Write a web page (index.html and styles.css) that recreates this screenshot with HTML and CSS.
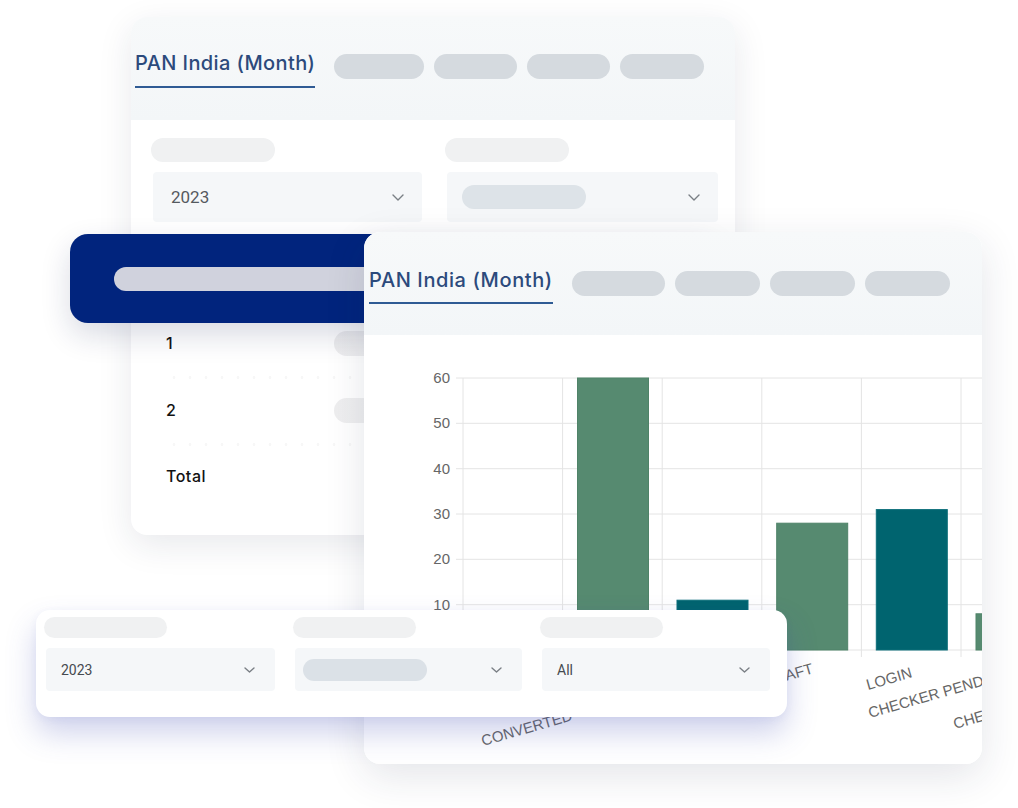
FILE: index.html
```html
<!DOCTYPE html>
<html lang="en">
<head>
<meta charset="utf-8">
<title>PAN India (Month)</title>
<link rel="stylesheet" href="styles.css">
</head>
<body>
<div class="stage">

  <!-- Back card: filters + table -->
  <section class="card card-a">
    <div class="card-head head-a">
      <div class="tabs">
        <div class="tab">PAN India (Month)</div>
        <span class="tab-pill w90"></span>
        <span class="tab-pill w83"></span>
        <span class="tab-pill w83"></span>
        <span class="tab-pill w84"></span>
      </div>
    </div>
    <div class="body-a">
      <div class="filters-a">
        <div class="field">
          <span class="sk-label w124"></span>
          <div class="select select-lg">
            <span class="val">2023</span>
            <svg class="chev" width="12" height="7" viewBox="0 0 12 7"><polyline points="1,1 6,6 11,1" /></svg>
          </div>
        </div>
        <div class="field">
          <span class="sk-label w124"></span>
          <div class="select select-lg">
            <span class="sk-inner w124"></span>
            <svg class="chev" width="12" height="7" viewBox="0 0 12 7"><polyline points="1,1 6,6 11,1" /></svg>
          </div>
        </div>
      </div>
      <div class="table-head"><span class="th-pill"></span></div>
      <div class="row"><span class="cell">1</span><span class="sk-cell"></span></div>
      <div class="sep"></div>
      <div class="row"><span class="cell">2</span><span class="sk-cell"></span></div>
      <div class="sep sep-2"></div>
      <div class="row"><span class="cell">Total</span></div>
    </div>
  </section>

  <!-- Chart card -->
  <section class="card card-b">
    <div class="card-head head-b">
      <div class="tabs">
        <div class="tab">PAN India (Month)</div>
        <span class="tab-pill w93"></span>
        <span class="tab-pill w85"></span>
        <span class="tab-pill w85"></span>
        <span class="tab-pill w85"></span>
      </div>
    </div>
    <div class="chart">
      <svg width="618" height="429" viewBox="0 0 618 429">
        <g class="grid">
          <line x1="92" y1="43" x2="618" y2="43"/>
          <line x1="92" y1="88.3" x2="618" y2="88.3"/>
          <line x1="92" y1="133.7" x2="618" y2="133.7"/>
          <line x1="92" y1="179" x2="618" y2="179"/>
          <line x1="92" y1="224.3" x2="618" y2="224.3"/>
          <line x1="92" y1="269.7" x2="618" y2="269.7"/>
          <line x1="92" y1="315" x2="618" y2="315"/>
          <line x1="99" y1="43" x2="99" y2="322"/>
          <line x1="198.6" y1="43" x2="198.6" y2="322"/>
          <line x1="298.2" y1="43" x2="298.2" y2="322"/>
          <line x1="397.8" y1="43" x2="397.8" y2="322"/>
          <line x1="497.4" y1="43" x2="497.4" y2="322"/>
          <line x1="597" y1="43" x2="597" y2="322"/>
        </g>
        <g class="ylab">
          <text x="86" y="48">60</text>
          <text x="86" y="93.3">50</text>
          <text x="86" y="138.7">40</text>
          <text x="86" y="184">30</text>
          <text x="86" y="229.3">20</text>
          <text x="86" y="274.7">10</text>
        </g>
        <rect class="bar-g" x="213.5" y="43" width="71" height="272"/>
        <rect class="bar-t" x="313" y="265.2" width="71" height="49.8"/>
        <rect class="bar-g" x="412.7" y="188.2" width="71" height="126.8"/>
        <rect class="bar-t" x="512.3" y="174.6" width="71" height="140.4"/>
        <rect class="bar-g" x="612" y="278.8" width="71" height="36.2"/>
        <g class="xlab">
          <text x="119" y="411" transform="rotate(-16 119 411)">CONVERTED</text>
          <text x="450" y="338" text-anchor="end" transform="rotate(-16 450 338)">DRAFT</text>
          <text x="504" y="355" transform="rotate(-16 504 355)">LOGIN</text>
          <text x="506" y="383" transform="rotate(-16 506 383)">CHECKER PENDING</text>
          <text x="591" y="394" transform="rotate(-16 591 394)">CHECKER</text>
        </g>
      </svg>
    </div>
  </section>

  <!-- Front card: filters -->
  <section class="card card-c">
    <div class="filters-c">
      <div class="field">
        <span class="sk-label sk-sm w123"></span>
        <div class="select select-sm">
          <span class="val">2023</span>
          <svg class="chev" width="11" height="6" viewBox="0 0 11 6"><polyline points="1,1 5.5,5 10,1" /></svg>
        </div>
      </div>
      <div class="field">
        <span class="sk-label sk-sm w123"></span>
        <div class="select select-sm">
          <span class="sk-inner sk-inner-sm"></span>
          <svg class="chev" width="11" height="6" viewBox="0 0 11 6"><polyline points="1,1 5.5,5 10,1" /></svg>
        </div>
      </div>
      <div class="field">
        <span class="sk-label sk-sm w123"></span>
        <div class="select select-sm">
          <span class="val">All</span>
          <svg class="chev" width="11" height="6" viewBox="0 0 11 6"><polyline points="1,1 5.5,5 10,1" /></svg>
        </div>
      </div>
    </div>
  </section>

</div>
</body>
</html>
```

FILE: styles.css
```css
* { box-sizing: border-box; }

html, body {
  margin: 0;
  padding: 0;
  background: #ffffff;
}

body {
  font-family: "Inter", "Noto Sans", sans-serif;
  color: #111;
}

.stage {
  position: relative;
  width: 1018px;
  height: 808px;
  overflow: hidden;
  background: #ffffff;
}

/* ---------- cards (free canvas windows) ---------- */
.card {
  position: absolute;
  background: #ffffff;
  border-radius: 16px;
}

.card-a {
  left: 131px;
  top: 17px;
  width: 604px;
  height: 518px;
  box-shadow: 0 10px 34px rgba(30, 40, 70, 0.10);
  z-index: 1;
}

.card-b {
  left: 364px;
  top: 232px;
  width: 618px;
  height: 532px;
  overflow: hidden;
  box-shadow: 0 12px 40px rgba(30, 40, 70, 0.12);
  z-index: 3;
}

.card-c {
  left: 36px;
  top: 610px;
  width: 751px;
  height: 107px;
  border-radius: 14px;
  box-shadow: 0 16px 30px rgba(70, 80, 180, 0.26), 0 2px 8px rgba(70, 80, 180, 0.06);
  z-index: 4;
}

/* ---------- tab headers ---------- */
.card-head {
  background: linear-gradient(#f7f9fa, #f3f6f8);
  border-radius: 16px 16px 0 0;
}

.head-a {
  padding: 34px 0 32px 4px;
}

.head-b {
  padding: 36px 0 31px 5px;
}

.tabs {
  display: flex;
  align-items: flex-start;
  gap: 10px;
}

.tab {
  font-family: "Inter", "Noto Sans", sans-serif;
  font-size: 20px;
  line-height: 24px;
  font-weight: 500;
  letter-spacing: 0.4px;
  color: #2c4a7c;
  padding-bottom: 10px;
  border-bottom: 2px solid #2f5b94;
  margin-right: 9px;
  white-space: nowrap;
}

.head-a .tab { padding-bottom: 11px; width: 180px; }
.head-b .tab { width: 184px; letter-spacing: 0.6px; }

.tab-pill {
  display: block;
  height: 25px;
  margin-top: 3px;
  border-radius: 13px;
  background: #d5dadf;
}

.w83 { width: 83px; }
.w84 { width: 84px; }
.w85 { width: 85px; }
.w90 { width: 90px; }
.w93 { width: 93px; }
.w123 { width: 123px; }
.w124 { width: 124px; }

/* ---------- card A body ---------- */
.body-a {
  padding: 18px 17px 0 20px;
}

.filters-a {
  display: grid;
  grid-template-columns: 271px 273px;
  column-gap: 23px;
}

.field {
  display: flex;
  flex-direction: column;
}

.sk-label {
  display: block;
  height: 24px;
  border-radius: 12px;
  background: #f0f1f2;
  margin-bottom: 10px;
}

.select {
  display: flex;
  align-items: center;
  justify-content: space-between;
  background: #f5f7f9;
  border-radius: 4px;
}

.select-lg {
  height: 50px;
  margin-left: 2px;
  padding: 0 18px 0 18px;
}

.select-lg .val {
  font-family: "Roboto", "Liberation Sans", sans-serif;
  font-size: 17px;
  color: #555a60;
}

.sk-inner {
  display: block;
  height: 24px;
  border-radius: 12px;
  background: #dde3e8;
  margin-left: -3px;
}

.chev polyline {
  fill: none;
  stroke: #7a7f85;
  stroke-width: 1.4;
  stroke-linecap: round;
  stroke-linejoin: round;
}

.table-head {
  margin: 12px 0 0 -81px;
  height: 89px;
  background: #01247d;
  border-radius: 18px;
  padding: 33px 0 0 44px;
  box-shadow: 0 12px 30px rgba(20, 30, 80, 0.16);
  position: relative;
  z-index: 2;
}

.th-pill {
  display: block;
  width: 420px;
  height: 24px;
  border-radius: 12px;
  background: #d0d2dd;
}

.row {
  display: grid;
  grid-template-columns: 168px 1fr;
  align-items: center;
  height: 40px;
  padding-left: 15px;
}

.cell {
  font-family: "Inter", "Noto Sans", sans-serif;
  font-size: 16px;
  font-weight: 500;
  letter-spacing: 0.5px;
  color: #121212;
}

.sk-cell {
  display: block;
  width: 120px;
  height: 25px;
  border-radius: 13px;
  background: linear-gradient(90deg, #eeeeef, #f3f3f4);
}

.sep {
  height: 3px;
  margin: 13px 0 11px 15px;
  background-image: radial-gradient(circle, #f7f7f7 1.2px, transparent 1.6px);
  background-size: 16px 3px;
}

.sep-2 { margin-bottom: 10px; }

/* ---------- chart ---------- */
.chart {
  height: 429px;
  background: #ffffff;
}

.chart svg { display: block; }

.grid line {
  stroke: #e4e4e4;
  stroke-width: 1;
}

.ylab text {
  font-family: "Liberation Sans", "Arial", sans-serif;
  font-size: 15px;
  fill: #666666;
  text-anchor: end;
}

.xlab text {
  font-family: "Liberation Sans", "Arial", sans-serif;
  font-size: 15px;
  fill: #666666;
}

.bar-g {
  fill: #568a70;
  stroke: #4f8368;
  stroke-width: 1;
}

.bar-t {
  fill: #00646f;
  stroke: #0d6f7a;
  stroke-width: 1;
}

/* ---------- card C ---------- */
.filters-c {
  display: grid;
  grid-template-columns: 229px 227px 228px;
  column-gap: 20px;
  padding: 7px 17px 0 10px;
}

.sk-sm {
  height: 21px;
  border-radius: 11px;
  margin-left: -2px;
}

.select-sm {
  height: 43px;
  padding: 0 20px 0 15px;
}

.select-sm .val {
  font-family: "Roboto", "Liberation Sans", sans-serif;
  font-size: 14px;
  color: #454a50;
}

.sk-inner-sm {
  width: 124px;
  height: 22px;
  border-radius: 11px;
  margin-left: -7px;
  background: #dbe1e7;
}
```
